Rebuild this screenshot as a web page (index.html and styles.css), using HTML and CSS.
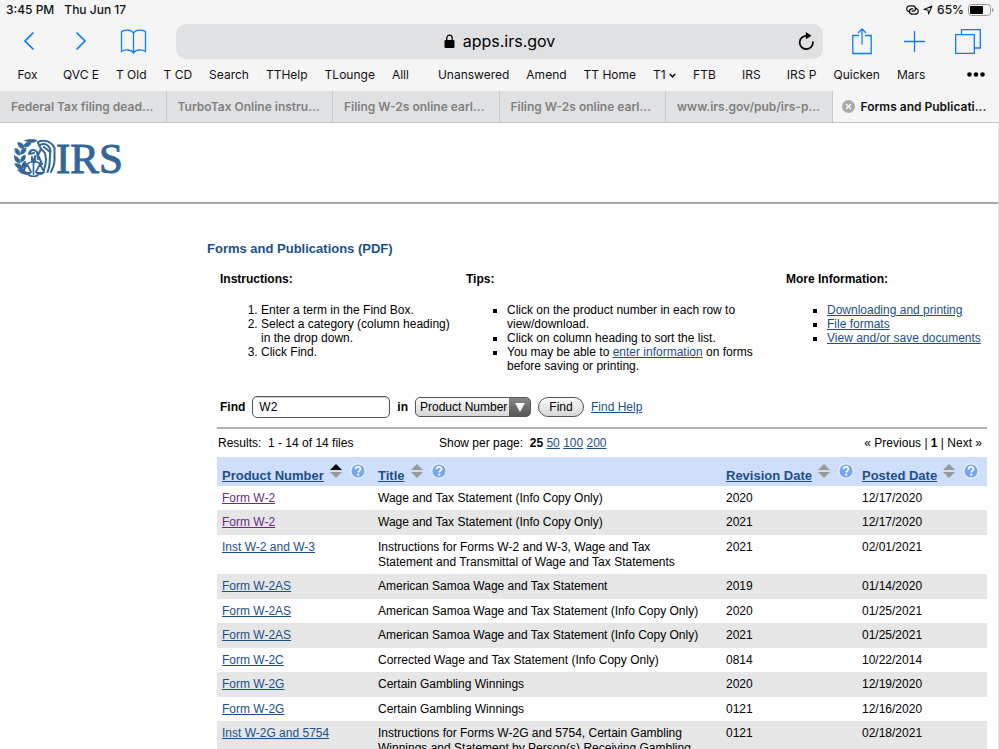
FILE: index.html
```html
<!DOCTYPE html>
<html lang="en">
<head>
    <meta charset="utf-8">
    <title>Forms and Publications (PDF)</title>
    <meta name="viewport" content="width=device-width, initial-scale=1">
    <link rel="stylesheet" href="styles.css">
</head>
<body>
    <!-- icons used more than once -->
    <svg class="defs" width="0" height="0" aria-hidden="true">
        <symbol id="sort" viewBox="0 0 12 15">
            <path class="sort-up" d="M6 0L12 6H0Z"/>
            <path class="sort-down" d="M0 8H12L6 14Z"/>
        </symbol>
        <symbol id="help" viewBox="0 0 16 16">
            <circle cx="8" cy="8" r="7.2" fill="#78a5f3" stroke="#eef4ff" stroke-width="1.2"/>
            <path d="M5.6 6.3C5.6 4.7 6.6 3.9 8 3.9s2.5.8 2.5 2.1c0 1.6-2.2 1.7-2.2 3.5" fill="none" stroke="#fff" stroke-width="1.7"/>
            <rect x="7.3" y="10.6" width="2" height="2" fill="#fff"/>
        </symbol>
    </svg>

    <header class="browser">
        <div class="status-bar">
            <span>3:45 PM</span>
            <span>Thu Jun 17</span>
            <span class="status-icons">
                <svg width="13" height="10" viewBox="0 0 13 10" fill="none" stroke="#111" stroke-width="1.2">
                    <path d="M4.2 6.9C-.6 6.3-.2.8 4.200.8H6.500C10.300.8 10.600 5.800 7.300 6.200H5.600"/>
                    <path d="M8.800 3.100C13.600 3.700 13.200 9.200 8.800 9.200H6.500C2.700 9.200 2.400 4.200 5.700 3.800H7.400"/>
                </svg>
                <svg width="10" height="10" viewBox="0 0 10 10" fill="none" stroke="#111" stroke-width="1.1" stroke-linejoin="round">
                    <path d="M9 1L5.600 8.900L5 5L1 4.500Z"/>
                </svg>
                <span>65%</span>
                <svg width="26" height="12" viewBox="0 0 26 12">
                    <rect x=".5" y=".5" width="22" height="11" rx="3" fill="none" stroke="#999"/>
                    <rect x="2" y="2" width="13" height="8" rx="1" fill="#000"/>
                    <path d="M24 4c2 .6 2 3.400 0 4z" fill="#999"/>
                </svg>
            </span>
        </div>

        <div class="toolbar">
            <div class="toolbar-buttons nav-buttons">
                <button type="button" aria-label="Back">
                    <svg width="12" height="20" viewBox="0 0 12 20"><path d="M10.500 1.500L2 10L10.500 18.500"/></svg>
                </button>
                <button type="button" aria-label="Forward">
                    <svg width="12" height="20" viewBox="0 0 12 20"><path d="M1.500 1.500L10 10L1.500 18.500"/></svg>
                </button>
                <button type="button" aria-label="Bookmarks">
                    <svg class="thin" width="27" height="25" viewBox="0 0 27 25"><path d="M13.500 4C11.500 .5 4 .2 1.500 2.800V22.500C5 20 11.500 20.500 13.500 24C15.500 20.500 22 20 25.500 22.500V2.800C23 .2 15.500 .5 13.500 4V24"/></svg>
                </button>
            </div>
            <div class="address">
                <svg width="11" height="14" viewBox="0 0 11 14"><rect x=".5" y="6" width="10" height="8" rx="1.200"/><path d="M2.800 7V4C2.800.2 8.200.2 8.200 4V7" fill="none" stroke="#000" stroke-width="1.300"/></svg>
                <span>apps.irs.gov</span>
                <button type="button" class="reload" aria-label="Reload">
                    <svg width="17" height="18" viewBox="0 0 17 18"><path d="M14.800 9.500A6.600 6.600 0 1 1 9.500 4" fill="none" stroke="#000" stroke-width="1.900"/><path d="M7.800 0L13.500 3.800L7.800 7.300Z"/></svg>
                </button>
            </div>
            <div class="toolbar-buttons page-buttons">
                <button type="button" aria-label="Share">
                    <svg class="thin" width="20" height="27" viewBox="0 0 20 27"><path d="M7 7.500H.8V25.500H19.200V7.500H13M10 16.500V1M6 5L10 1L14 5"/></svg>
                </button>
                <button type="button" aria-label="New tab">
                    <svg class="thin" width="21" height="21" viewBox="0 0 21 21"><path d="M10.500 0V21M0 10.500H21"/></svg>
                </button>
                <button type="button" aria-label="Tabs">
                    <svg class="thin" width="26" height="25" viewBox="0 0 26 25"><path d="M.7 5.700H19.300V24.300H.7ZM6.500 5.500V.7H25.300V19H19.500"/></svg>
                </button>
            </div>
        </div>

        <nav class="bookmarks">
            <a href="#" class="short">Fox</a>
            <a href="#">QVC E</a>
            <a href="#">T Old</a>
            <a href="#">T CD</a>
            <a href="#">Search</a>
            <a href="#">TTHelp</a>
            <a href="#">TLounge</a>
            <a href="#" class="group-end">Alll</a>
            <a href="#">Unanswered</a>
            <a href="#">Amend</a>
            <a href="#">TT Home</a>
            <a href="#">T1 <svg width="7" height="5" viewBox="0 0 7 5"><path d="M.8 1L3.500 3.800L6.200 1" fill="none" stroke="#111" stroke-width="1.500"/></svg></a>
            <a href="#">FTB</a>
            <a href="#" class="short">IRS</a>
            <a href="#">IRS P</a>
            <a href="#">Quicken</a>
            <a href="#">Mars</a>
            <button type="button" class="more" aria-label="More">
                <svg width="18" height="5" viewBox="0 0 18 5"><circle cx="2.500" cy="2.500" r="2.300"/><circle cx="9" cy="2.500" r="2.300"/><circle cx="15.500" cy="2.500" r="2.300"/></svg>
            </button>
        </nav>

        <div class="tabs">
            <a href="#" class="tab">Federal Tax filing dead...</a>
            <a href="#" class="tab">TurboTax Online instru...</a>
            <a href="#" class="tab">Filing W-2s online earl...</a>
            <a href="#" class="tab">Filing W-2s online earl...</a>
            <a href="#" class="tab">www.irs.gov/pub/irs-p...</a>
            <a href="#" class="tab active">
                <svg width="13" height="13" viewBox="0 0 13 13"><circle cx="6.500" cy="6.500" r="6.500" fill="#a8a8a8"/><path d="M4 4L9 9M9 4L4 9" stroke="#fff" stroke-width="1.200"/></svg>
                <span>Forms and Publicati...</span>
            </a>
        </div>
    </header>

    <div class="page">
        <div class="site-header">
            <svg width="42" height="38" viewBox="0 0 42 38" fill="none" stroke="#336699" stroke-width="2" stroke-linecap="round" aria-hidden="true">
                <!-- olive branch -->
                <g fill="#336699" stroke-width=".8" stroke-linejoin="round">
                    <path d="M1 10C4 9 6 12 6 16C2 16 1 13 1 10Z"/>
                    <path d="M7 15C6 11 9 9 12 9C12 13 10 15 7 15Z"/>
                    <path d="M4 4C8 3 10 6 10 9C7 10 4 8 4 4Z"/>
                    <path d="M10 7C11 3 14 3 17 4C16 7 13 9 10 7Z"/>
                    <path d="M11 1.500C15 0 20 0 23 1.500C20 4 15 4 11 1.500Z"/>
                    <path d="M.5 17C4 18 6 20 6 24C2 24 .5 21 .5 17Z"/>
                    <path d="M7 23C6 19 8 17 11 16C12 20 10 22 7 23Z"/>
                    <path d="M1 25C5 24 8 26 9 30C5 31 2 28 1 25Z"/>
                    <path d="M9 29C7 26 8 24 11 22C13 26 12 28 9 29Z"/>
                    <path d="M4 31C8 29 11 31 13 34C9 36 6 34 4 31Z"/>
                </g>
                <!-- eagle head and wings -->
                <path d="M15 15C16 10 21 10 23 13L24 20M15 15L20 14M18 18V22M21 17V23" />
                <path d="M24 3C31 0 38 3 40.500 9V22C40.500 27 38 30 37 33"/>
                <path d="M26 6C31 3 36 7 36.500 12C35 19 37 25 33.500 33"/>
                <path d="M24 4L27 10L31 14L32 20C32 24 31 28 30 31"/>
                <path d="M27 10L24 16L28 25M30 8L36 13"/>
                <!-- scales -->
                <path d="M19.500 20V35M13 25C16 22 23 22 27 25M13 25L9 33M13 25L17 33M26 25L22 33M26 25L30 33" stroke-width="1.700"/>
                <path d="M8 33H18C16 37 10 37 8 33ZM21 33H31C29 37 23 37 21 33Z" fill="#336699" stroke="none"/>
                <path d="M15 36C18 38 21 38 24 36"/>
            </svg>
            <span class="irs">IRS</span>
        </div>

        <main class="content">
            <h1>Forms and Publications (PDF)</h1>

            <div class="help-columns">
                <section>
                    <h2>Instructions:</h2>
                    <ol>
                        <li>Enter a term in the Find Box.</li>
                        <li>Select a category (column heading) in the drop down.</li>
                        <li>Click Find.</li>
                    </ol>
                </section>
                <section>
                    <h2>Tips:</h2>
                    <ul>
                        <li>Click on the product number in each row to view/download.</li>
                        <li>Click on column heading to sort the list.</li>
                        <li>You may be able to <a href="#">enter information</a> on forms before saving or printing.</li>
                    </ul>
                </section>
                <section>
                    <h2>More Information:</h2>
                    <ul>
                        <li><a href="#">Downloading and printing</a></li>
                        <li><a href="#">File formats</a></li>
                        <li><a href="#">View and/or save documents</a></li>
                    </ul>
                </section>
            </div>

            <form class="find-form">
                <label for="find">Find</label>
                <input type="text" id="find" value="W2">
                <label for="criteria">in</label>
                <span class="select-wrap">
                    <select id="criteria">
                        <option>Product Number</option>
                        <option>Title</option>
                        <option>Revision Date</option>
                        <option>Posted Date</option>
                    </select>
                    <svg width="10" height="9" viewBox="0 0 10 9"><path d="M0 0H10L5 9Z" fill="#fff"/></svg>
                </span>
                <button type="button">Find</button>
                <a href="#">Find Help</a>
            </form>

            <div class="results">
                <div class="results-bar">
                    <span>Results:&nbsp; 1 - 14 of 14 files</span>
                    <span>Show per page:&nbsp; <b>25</b> <a href="#">50</a> <a href="#">100</a> <a href="#">200</a></span>
                    <span class="pager">« Previous | <b>1</b> | Next »</span>
                </div>
                <table>
                    <colgroup>
                        <col class="col-product">
                        <col>
                        <col class="col-revision">
                        <col class="col-posted">
                    </colgroup>
                    <thead>
                        <tr>
                            <th><div class="heading"><a href="#">Product Number</a><svg class="sort ascending"><use href="#sort"/></svg><svg class="help"><use href="#help"/></svg></div></th>
                            <th><div class="heading"><a href="#">Title</a><svg class="sort"><use href="#sort"/></svg><svg class="help"><use href="#help"/></svg></div></th>
                            <th><div class="heading"><a href="#">Revision Date</a><svg class="sort"><use href="#sort"/></svg><svg class="help"><use href="#help"/></svg></div></th>
                            <th><div class="heading"><a href="#">Posted Date</a><svg class="sort"><use href="#sort"/></svg><svg class="help"><use href="#help"/></svg></div></th>
                        </tr>
                    </thead>
                    <tbody>
                        <tr><td><a href="#" class="visited">Form W-2</a></td><td>Wage and Tax Statement (Info Copy Only)</td><td>2020</td><td>12/17/2020</td></tr>
                        <tr><td><a href="#" class="visited">Form W-2</a></td><td>Wage and Tax Statement (Info Copy Only)</td><td>2021</td><td>12/17/2020</td></tr>
                        <tr><td><a href="#">Inst W-2 and W-3</a></td><td>Instructions for Forms W-2 and W-3, Wage and Tax Statement and Transmittal of Wage and Tax Statements</td><td>2021</td><td>02/01/2021</td></tr>
                        <tr><td><a href="#">Form W-2AS</a></td><td>American Samoa Wage and Tax Statement</td><td>2019</td><td>01/14/2020</td></tr>
                        <tr><td><a href="#">Form W-2AS</a></td><td>American Samoa Wage and Tax Statement (Info Copy Only)</td><td>2020</td><td>01/25/2021</td></tr>
                        <tr><td><a href="#">Form W-2AS</a></td><td>American Samoa Wage and Tax Statement (Info Copy Only)</td><td>2021</td><td>01/25/2021</td></tr>
                        <tr><td><a href="#">Form W-2C</a></td><td>Corrected Wage and Tax Statement (Info Copy Only)</td><td>0814</td><td>10/22/2014</td></tr>
                        <tr><td><a href="#">Form W-2G</a></td><td>Certain Gambling Winnings</td><td>2020</td><td>12/19/2020</td></tr>
                        <tr><td><a href="#">Form W-2G</a></td><td>Certain Gambling Winnings</td><td>0121</td><td>12/16/2020</td></tr>
                        <tr><td><a href="#">Inst W-2G and 5754</a></td><td>Instructions for Forms W-2G and 5754, Certain Gambling Winnings and Statement by Person(s) Receiving Gambling Winnings</td><td>0121</td><td>02/18/2021</td></tr>
                    </tbody>
                </table>
            </div>
        </main>
    </div>
</body>
</html>
```

FILE: styles.css
```css
* {
    box-sizing: border-box;
}
body {
    margin: 0;
    height: 100vh;
    display: flex;
    flex-direction: column;
    overflow: hidden;
    background-color: #fff;
    color: #000;
    font-family: "Liberation Sans", Arial, sans-serif;
    font-size: 12px;
    line-height: 14px;
}
svg {
    display: block;
    flex: none;
}
.defs {
    position: absolute;
}
a {
    color: #1b4f8b;
}
a.visited {
    color: #6b2a87;
}

/* browser bars */
.browser {
    flex: none;
    background-color: #f5f5f5;
    font-family: Inter, "Noto Sans", sans-serif;
    font-size: 12px;
    color: #111;
}
.browser a {
    color: inherit;
    text-decoration: none;
}
.browser button {
    background: none;
    border: none;
    padding: 0;
}
.status-bar {
    display: flex;
    align-items: center;
    gap: 10px;
    height: 20px;
    padding: 0 5px 0 6px;
    font-weight: 500;
}
.status-icons {
    display: flex;
    align-items: center;
    gap: 4px;
    margin-left: auto;
}
.toolbar {
    display: flex;
    align-items: center;
    height: 42px;
}
.toolbar button path {
    fill: none;
    stroke: #0a7aff;
    stroke-width: 1.7;
}
.toolbar .thin path {
    stroke-width: 1.3;
}
.toolbar-buttons {
    display: grid;
    grid-template-columns: 1fr 1fr 1fr;
    justify-items: center;
    align-items: center;
    width: 176px;
}
.nav-buttons {
    padding: 0 17px 0 3px;
}
.page-buttons {
    padding: 0 5px 0 13px;
}
.address {
    position: relative;
    flex: 1;
    display: flex;
    align-items: center;
    justify-content: center;
    gap: 8px;
    height: 35px;
    border-radius: 10px;
    background-color: #e0e1e3;
    font-size: 16px;
    line-height: 20px;
    color: #000;
}
.reload {
    position: absolute;
    right: 8px;
}
.toolbar .reload path:first-child {
    stroke: #000;
}
.toolbar .reload path:last-child {
    fill: #000;
    stroke: none;
}
.bookmarks {
    display: flex;
    align-items: center;
    gap: 17px;
    height: 29px;
    padding: 0 14px 4px 9px;
    white-space: nowrap;
}
.bookmarks a svg {
    display: inline-block;
    vertical-align: middle;
}
.bookmarks .short {
    width: 37px;
    text-align: center;
}
.bookmarks .group-end {
    margin-right: 12px;
}
.bookmarks .more {
    margin-left: auto;
}
.tabs {
    display: grid;
    grid-template-columns: repeat(6, minmax(0, 1fr));
    height: 32px;
    border-bottom: 1px solid #c4c5c7;
}
.tab {
    display: flex;
    align-items: center;
    gap: 6px;
    padding-left: 11px;
    background-color: #e0e1e3;
    border-right: 1px solid #c8c9cb;
    font-weight: 600;
    white-space: nowrap;
}
.browser .tab {
    color: #808080;
}
.browser .tab.active {
    padding-left: 9px;
    background-color: #f5f5f5;
    border-right: none;
    color: #111;
}

/* page */
.page {
    flex: 1;
    min-height: 0;
    overflow: hidden;
    border-right: 1px solid #e2e2e2;
}
.site-header {
    display: flex;
    align-items: flex-start;
    height: 81px;
    padding: 16px 14px 0;
    border-bottom: 2px solid #a9a9a9;
}
.irs {
    font-family: "Liberation Serif", "Times New Roman", serif;
    font-size: 43px;
    line-height: 40px;
    color: #336699;
    -webkit-text-stroke: 1px #336699;
}
.content {
    padding: 37px 11px 0 207px;
}
h1 {
    margin: 0;
    font-size: 13px;
    line-height: 16px;
    color: #1b4f8b;
}
h2 {
    margin: 0;
    font-size: 12px;
    line-height: 16px;
}
.help-columns {
    display: grid;
    grid-template-columns: 246px 320px 1fr;
    margin-top: 14px;
    padding-left: 13px;
}
.help-columns ol,
.help-columns ul {
    margin: 16px 0 0;
    padding: 0 10px 0 41px;
}
.help-columns ul {
    padding-right: 28px;
    list-style-type: square;
}
.help-columns section:last-child ul {
    padding-right: 0;
}
.find-form {
    display: flex;
    align-items: center;
    gap: 7px;
    margin-top: 23px;
    padding-left: 13px;
}
.find-form label {
    font-weight: bold;
}
.find-form input,
.find-form select,
.find-form button {
    font-family: inherit;
    font-size: 12px;
    color: #000;
    border: 1px solid #555;
}
.find-form input {
    width: 138px;
    height: 22px;
    padding: 0 6px;
    border-radius: 5px;
    background-color: #fff;
    box-shadow: inset 0 1px 1px #ccc;
}
.select-wrap {
    position: relative;
}
.select-wrap select {
    appearance: none;
    display: block;
    width: 116px;
    height: 20px;
    padding: 0 21px 0 4px;
    border-radius: 5px;
    background: linear-gradient(#888, #555) right / 21px 100% no-repeat, linear-gradient(#fafafa, #d6d6d6);
}
.select-wrap svg {
    position: absolute;
    right: 6px;
    top: 6px;
    pointer-events: none;
}
.find-form button {
    width: 46px;
    height: 20px;
    padding: 0;
    border-radius: 10px;
    background: linear-gradient(#fafafa, #d6d6d6);
}
.results {
    margin: 9px 0 0 10px;
    border-top: 2px solid #b0b0b0;
}
.results-bar {
    display: grid;
    grid-template-columns: 221px 1fr auto;
    align-items: center;
    height: 28px;
    padding: 0 5px 0 1px;
}
table {
    width: 100%;
    table-layout: fixed;
    border-collapse: collapse;
}
.col-product {
    width: 156px;
}
.col-revision {
    width: 136px;
}
.col-posted {
    width: 130px;
}
th {
    padding: 0 0 0 5px;
    background-color: #cfdefb;
    font-size: 13px;
}
.heading {
    display: flex;
    align-items: flex-start;
    height: 29px;
}
.heading a {
    padding-top: 11px;
    line-height: 16px;
    white-space: nowrap;
}
.sort {
    width: 12px;
    height: 15px;
    margin: 7px 8px 0 6px;
    fill: #999;
}
.ascending {
    --up: #000;
}
.sort-up {
    fill: var(--up, #999);
}
.help {
    width: 16px;
    height: 16px;
    margin-top: 6px;
}
td {
    padding: 5px 18px 4px 5px;
    line-height: 15px;
    vertical-align: top;
}
tbody tr:nth-child(even) {
    background-color: #e6e6e6;
}
tbody tr:nth-child(even) td {
    padding-bottom: 5px;
}
```
